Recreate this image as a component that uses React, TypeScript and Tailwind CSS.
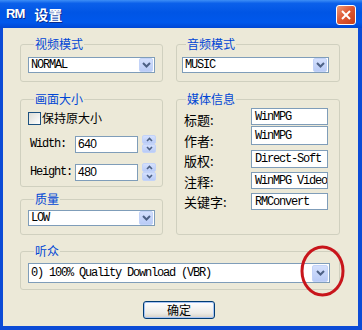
import React from "react";

const MONO = "font-['Liberation_Mono',monospace] text-[12px] tracking-[-1.2px] text-black";
const CJK = "font-['Noto_Sans_CJK_SC','Noto_Sans',sans-serif]";

function DropBtn({ big = false }: { big?: boolean }) {
  return (
    <div
      className={`${big ? "w-[16px] h-[17px]" : "w-[14px] h-[14px]"} shrink-0 rounded-[2px] border border-[#c3d3f8] bg-[linear-gradient(to_bottom,#d4e0fd,#b9cbf6)] flex items-center justify-center`}
    >
      <svg width="9" height="6" viewBox="0 0 9 6">
        <polyline points="1,1 4.5,4.5 8,1" fill="none" stroke="#4d6185" strokeWidth="2" />
      </svg>
    </div>
  );
}

function Select({ text, big = false }: { text: string; big?: boolean }) {
  return (
    <div
      className={`flex items-center ${big ? "h-[20px]" : "h-[16px]"} border border-[#7f9db9] bg-white pl-[2px] pr-[1px]`}
    >
      <span className={`flex-1 whitespace-nowrap overflow-hidden leading-[12px] ${MONO}`}>{text}</span>
      <DropBtn big={big} />
    </div>
  );
}

function Group({
  label,
  children,
  className = "",
  legendMl = "ml-[6px]",
}: {
  label: string;
  children: React.ReactNode;
  className?: string;
  legendMl?: string;
}) {
  return (
    <fieldset className={`border border-[#d0d0bf] rounded-[3px] ${className}`}>
      <legend className={`${legendMl} px-[1px] text-[12px] leading-[12px] text-[#0046d5] ${CJK}`}>{label}</legend>
      {children}
    </fieldset>
  );
}

function Spinner() {
  const btn =
    "h-[9px] w-[14px] rounded-[2px] border border-[#c3d3f8] bg-[linear-gradient(to_bottom,#d4e0fd,#b9cbf6)] flex items-center justify-center";
  return (
    <div className="flex flex-col ml-[4px]">
      <div className={btn}>
        <svg width="7" height="5" viewBox="0 0 7 5">
          <polyline points="1,4 3.5,1.5 6,4" fill="none" stroke="#4d6185" strokeWidth="1.6" />
        </svg>
      </div>
      <div className={btn}>
        <svg width="7" height="5" viewBox="0 0 7 5">
          <polyline points="1,1 3.5,3.5 6,1" fill="none" stroke="#4d6185" strokeWidth="1.6" />
        </svg>
      </div>
    </div>
  );
}

function NumRow({ label, value, className = "" }: { label: string; value: string; className?: string }) {
  return (
    <div className={`flex items-center ${className}`}>
      <span className={`w-[47px] pl-[2px] leading-[12px] ${MONO}`}>{label}</span>
      <div className="w-[63px] h-[17px] border border-[#7f9db9] bg-white pl-[2px] flex items-center">
        <span className="font-['Liberation_Sans',Arial,sans-serif] text-[12px] leading-[12px] tracking-[-0.5px] text-black">
          {value}
        </span>
      </div>
      <Spinner />
    </div>
  );
}

function TextBox({ value, className }: { value: string; className: string }) {
  return (
    <div
      className={`w-[77px] border border-[#7f9db9] bg-white pl-[3px] flex items-center overflow-hidden whitespace-nowrap ${className}`}
    >
      <span className={`leading-[12px] ${MONO}`}>{value}</span>
    </div>
  );
}

export default function App() {
  const labels = ["标题:", "作者:", "版权:", "注释:", "关键字:"];
  return (
    <div className="relative w-[362px] h-[330px] flex flex-col overflow-hidden select-none">
      {/* Title bar */}
      <div className="h-[28px] shrink-0 flex items-center pl-[6px] pr-[6px] bg-[linear-gradient(to_bottom,#3d8ef6_0%,#0b60ea_12%,#0055e5_45%,#0058ec_80%,#0047d4_100%)]">
        <div className="flex items-center text-white font-bold [text-shadow:1px_1px_0_#0a2a8c]">
          <span className="font-['Liberation_Sans',Arial,sans-serif] text-[13px] leading-[14px] tracking-[-1px]">RM</span>
          <span className={`ml-[10px] text-[14px] leading-[16px] ${CJK}`}>设置</span>
        </div>
        <div className="flex-1" />
        <div className="mt-[2px] w-[20px] h-[20px] rounded-[3px] border border-white bg-[linear-gradient(135deg,#ec9a78_0%,#df5a35_45%,#c83d17_100%)] flex items-center justify-center">
          <svg width="12" height="12" viewBox="0 0 12 12">
            <line x1="2" y1="2" x2="10" y2="10" stroke="white" strokeWidth="2" />
            <line x1="10" y1="2" x2="2" y2="10" stroke="white" strokeWidth="2" />
          </svg>
        </div>
      </div>

      {/* Body */}
      <div className="flex-1 flex flex-col bg-[#ece9d8] border-l-[3px] border-r-[4px] border-b-[4px] border-[#0c4bd6] pl-[17px] pr-[18px] pt-[10px]">
        <div className="flex gap-[13px]">
          {/* Left column */}
          <div className="w-[143px] flex flex-col">
            <Group label="视频模式" className="pl-[7px] pr-[7px] pt-[7px] pb-[8px]">
              <Select text="NORMAL" />
            </Group>
            <Group label="画面大小" className="mt-[11px] pl-[7px] pr-[4px] pt-[7px] pb-[5px]">
              <div className="flex items-center h-[12px]">
                <div className="w-[13px] h-[13px] border border-[#1c5180] bg-[linear-gradient(135deg,#dcdcd6,#ffffff)]" />
                <span className={`ml-[1px] text-[12px] leading-[12px] text-black ${CJK}`}>保持原大小</span>
              </div>
              <NumRow label="Width:" value="640" className="mt-[11px]" />
              <NumRow label="Height:" value="480" className="mt-[10px]" />
            </Group>
            <Group label="质量" className="mt-[6px] pl-[7px] pr-[7px] pt-[5px] pb-[8px]">
              <Select text="LOW" />
            </Group>
          </div>

          {/* Right column */}
          <div className="w-[164px] flex flex-col">
            <Group label="音频模式" legendMl="ml-[4px]" className="pl-[5px] pr-[10px] pt-[7px] pb-[8px]">
              <Select text="MUSIC" />
            </Group>
            <Group label="媒体信息" legendMl="ml-[2px]" className="mt-[11px] flex-1 pl-[7px] pr-[10px] pt-[3px]">
              <div className="flex">
                <div className="w-[67px] flex flex-col pt-[2px]">
                  {labels.map((l) => (
                    <div key={l} className={`h-[20.5px] leading-[20.5px] text-[13px] text-black ${CJK}`}>
                      {l}
                    </div>
                  ))}
                </div>
                <div className="flex flex-col">
                  <TextBox value="WinMPG" className="h-[17px]" />
                  <TextBox value="WinMPG" className="h-[19px] mt-[1px]" />
                  <TextBox value="Direct-Soft" className="h-[18px] mt-[5px]" />
                  <TextBox value="WinMPG Video" className="h-[17px] mt-[4px]" />
                  <TextBox value="RMConvert" className="h-[17px] mt-[4px]" />
                </div>
              </div>
            </Group>
          </div>
        </div>

        <Group label="听众" className="mt-[10px] pl-[7px] pr-[9px] pt-[6px] pb-[6px]">
          <Select text="0) 100% Quality Download (VBR)" big />
        </Group>

        <div className="mt-[11px] ml-[123px] w-[72px] h-[18px] rounded-[3px] border border-[#003c74] bg-[linear-gradient(to_bottom,#ffffff,#ecebe6_70%,#d6d0c5)] shadow-[inset_0_0_0_1px_#a8c4f3] flex items-center justify-center">
          <span className={`text-[12px] leading-[12px] text-black ${CJK}`}>确定</span>
        </div>
      </div>

      {/* Red annotation circle */}
      <svg className="absolute left-[300px] top-[245px]" width="46" height="52" viewBox="0 0 46 52">
        <ellipse cx="22.5" cy="26" rx="20.5" ry="24" fill="none" stroke="#c8151b" strokeWidth="3" />
      </svg>
    </div>
  );
}
